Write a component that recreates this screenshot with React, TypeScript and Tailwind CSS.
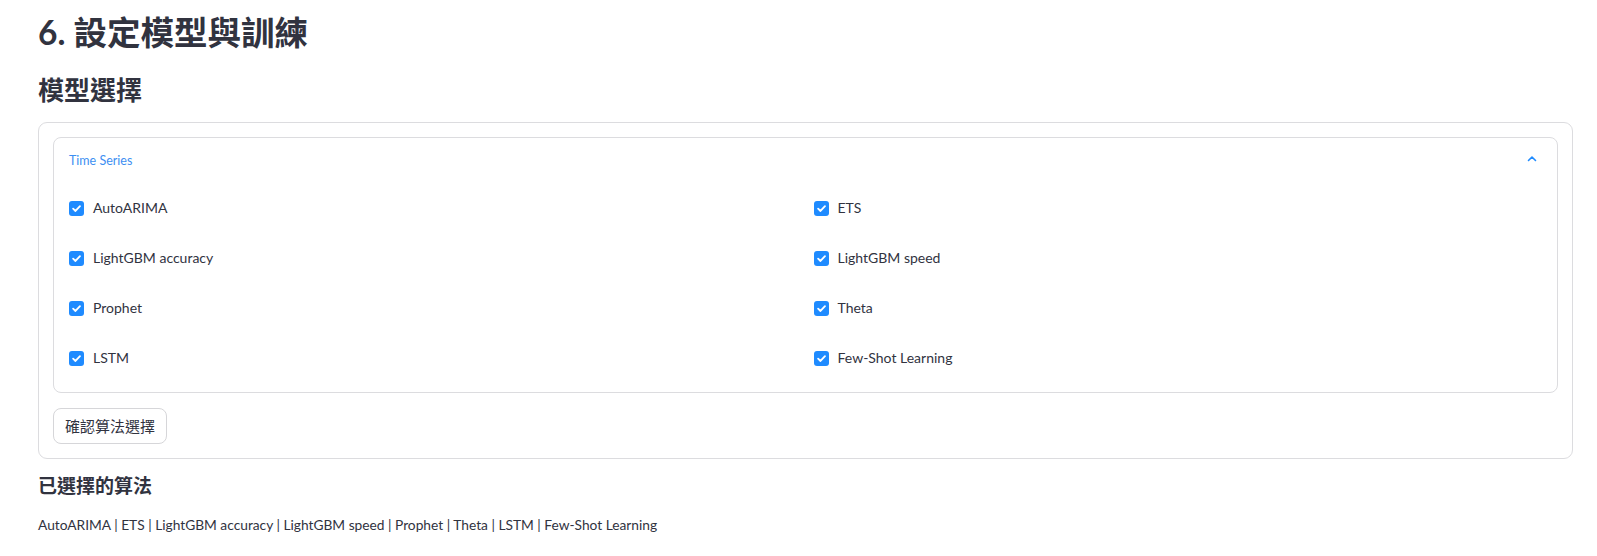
import React from "react";

const FONT = {
  fontFamily:
    '"Source Sans Pro", Lato, "Noto Sans CJK TC", "Noto Sans CJK SC", sans-serif',
};

const models: [string, string][] = [
  ["AutoARIMA", "ETS"],
  ["LightGBM accuracy", "LightGBM speed"],
  ["Prophet", "Theta"],
  ["LSTM", "Few-Shot Learning"],
];

function Check({ label }: { label: string }) {
  return (
    <div className="flex items-center gap-[9px] h-[50px]">
      <span className="w-[15px] h-[15px] rounded-[3px] bg-[#1f8bff] flex items-center justify-center">
        <svg width="11" height="11" viewBox="0 0 12 12" fill="none">
          <path
            d="M2.3 6.2 L4.9 8.7 L9.8 3.4"
            stroke="white"
            strokeWidth="2"
            strokeLinecap="round"
            strokeLinejoin="round"
          />
        </svg>
      </span>
      <span className="text-[14px] text-[#31333f] leading-5">{label}</span>
    </div>
  );
}

export default function App() {
  return (
    <div
      className="bg-white w-full h-[556px] pl-[38px] pr-[24px] pt-[10px] text-[#31333f]"
      style={FONT}
    >
      <h2 className="text-[33.5px] leading-[44px] font-bold text-[#31333f]">
        6. 設定模型與訓練
      </h2>
      <h3 className="mt-[18px] text-[26px] leading-[36px] font-bold text-[#31333f]">
        模型選擇
      </h3>
      <div className="mt-[14px] border border-[#dcdcdf] rounded-[9px] p-[14px] flex flex-col gap-[15px]">
        <div className="border border-[#dcdcdf] rounded-[8px] px-[15px] pb-[9px]">
          <div className="h-[45px] flex items-center justify-between">
            <span className="text-[12.5px] text-[#3d8ff2] mt-[1px]">Time Series</span>
            <svg
              width="12"
              height="12"
              viewBox="0 0 12 12"
              fill="none"
              className="mr-[4px] -mt-[3px]"
            >
              <path
                d="M2.5 7.5 L6 4 L9.5 7.5"
                stroke="#1f8bff"
                strokeWidth="1.6"
                strokeLinecap="round"
                strokeLinejoin="round"
              />
            </svg>
          </div>
          <div className="grid grid-cols-2 gap-x-[16px]">
            {models.map(([a, b]) => (
              <React.Fragment key={a}>
                <Check label={a} />
                <Check label={b} />
              </React.Fragment>
            ))}
          </div>
        </div>
        <div>
          <button className="h-[36px] w-[114px] border border-[#d6d6d9] rounded-[8px] bg-white text-[15px] text-[#31333f] flex items-center justify-center">
            確認算法選擇
          </button>
        </div>
      </div>
      <h4 className="mt-[13px] text-[19px] leading-[28px] font-bold text-[#31333f]">
        已選擇的算法
      </h4>
      <p className="mt-[15px] text-[13.75px] leading-5 text-[#31333f]">
        AutoARIMA | ETS | LightGBM accuracy | LightGBM speed | Prophet | Theta |
        LSTM | Few-Shot Learning
      </p>
    </div>
  );
}
